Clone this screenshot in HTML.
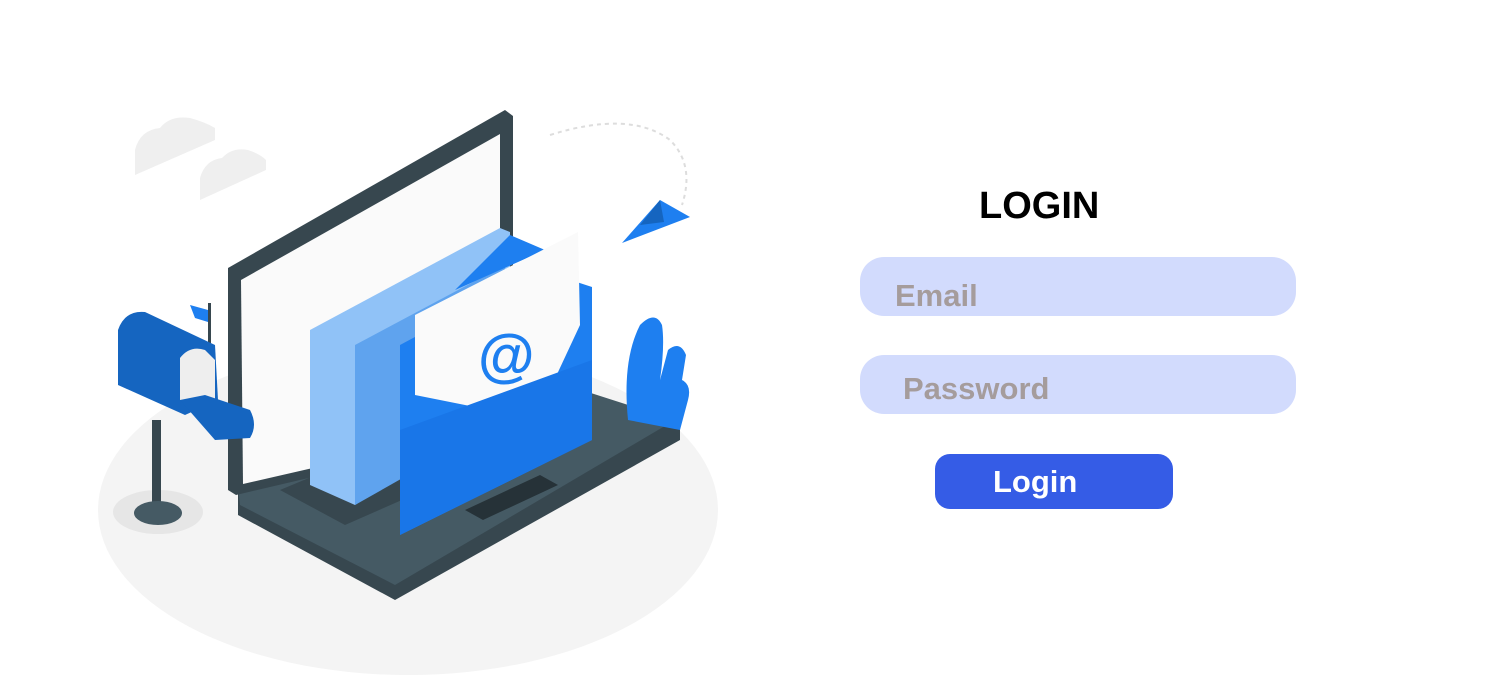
<!DOCTYPE html>
<html><head><meta charset="utf-8">
<style>
html,body{margin:0;padding:0;background:#fff;width:1512px;height:697px;overflow:hidden;font-family:"Liberation Sans",sans-serif;}
.abs{position:absolute}
h1{position:absolute;left:979px;top:183px;margin:0;font-size:38px;font-weight:bold;color:#000;line-height:46px;}
.inp{position:absolute;left:860px;width:436px;height:59px;border-radius:24px;background:#d2dbfd;}
.ph{position:absolute;font-size:31px;font-weight:bold;color:#a59c9c;line-height:36px;}
.btn{position:absolute;left:935px;top:454px;width:238px;height:55px;border-radius:15px;background:#355ce6;}
.bt{position:absolute;left:993px;top:464px;font-size:31px;font-weight:bold;color:#fff;line-height:36px;}
</style></head><body>
<svg class="abs" style="left:0;top:0" width="760" height="697" viewBox="0 0 760 697">
  <ellipse cx="408" cy="510" rx="310" ry="165" fill="#f4f4f4"/>
  <path d="M135 175 L135 150 Q140 130 160 128 Q170 115 190 118 Q205 122 215 128 L215 140 Z" fill="#efefef"/>
  <path d="M200 200 L200 178 Q205 160 222 158 Q232 147 248 150 Q260 154 266 160 L266 170 Z" fill="#efefef"/>
  <path d="M550 135 Q630 110 670 140 Q695 165 682 205" fill="none" stroke="#ddd" stroke-width="2" stroke-dasharray="4 4"/>
  <polygon points="622,243 660,200 690,217" fill="#1e7ff0"/>
  <polygon points="640,225 660,200 664,222" fill="#1565c0"/>
  <ellipse cx="158" cy="512" rx="45" ry="22" fill="#e6e6e6"/>
  <polygon points="238,488 513,372 680,425 680,440 395,600 238,515" fill="#37474f"/>
  <polygon points="238,485 513,368 675,420 395,585 240,505" fill="#455a64"/>
  <polygon points="280,490 400,440 470,470 345,525" fill="#37474f"/>
  <polygon points="465,510 540,475 558,485 483,520" fill="#263238"/>
  <polygon points="228,268 505,110 513,116 513,430 236,495 228,490" fill="#37474f"/>
  <polygon points="241,280 500,134 500,425 243,484" fill="#fafafa"/>
  <polygon points="310,330 500,228 510,232 510,405 355,505 310,485" fill="#90c2f7"/>
  <polygon points="355,345 505,265 505,420 355,505" fill="#5fa3ee"/>
  <polygon points="400,345 540,270 592,287 592,440 400,535" fill="#1e7ff0"/>
  <polygon points="455,290 510,235 545,250" fill="#1e7ff0"/>
  <polygon points="415,315 578,232 580,325 545,400 490,410 415,395" fill="#fafafa"/>
  <polygon points="400,430 400,535 592,440 592,360" fill="#1976e8"/>
  <text x="478" y="375" font-family="Liberation Sans,sans-serif" font-size="58" font-weight="bold" fill="#1e7ff0">@</text>
  <path d="M628 420 Q622 360 640 325 Q655 310 662 325 Q665 345 660 380 L668 350 Q680 340 686 355 L682 380 Q692 385 688 400 L680 430 Z" fill="#1e7ff0"/>
  <rect x="152" y="420" width="9" height="90" fill="#37474f"/>
  <ellipse cx="158" cy="513" rx="24" ry="12" fill="#455a64"/>
  <rect x="208" y="303" width="3" height="40" fill="#37474f"/>
  <polygon points="190,305 208,310 208,322 195,318" fill="#1e7ff0"/>
  <path d="M118 330 Q125 310 145 312 L215 345 L218 400 L185 415 L118 385 Z" fill="#1565c0"/>
  <path d="M180 358 Q190 345 205 350 L215 360 L215 400 L180 400 Z" fill="#eeeeee"/>
  <path d="M180 400 L205 395 L250 410 Q258 425 250 438 L215 440 Z" fill="#1565c0"/>
</svg>
<h1>LOGIN</h1>
<div class="inp" style="top:257px"></div>
<div class="ph" style="left:895px;top:278px">Email</div>
<div class="inp" style="top:355px"></div>
<div class="ph" style="left:903px;top:371px">Password</div>
<div class="btn"></div>
<div class="bt">Login</div>
</body></html>
